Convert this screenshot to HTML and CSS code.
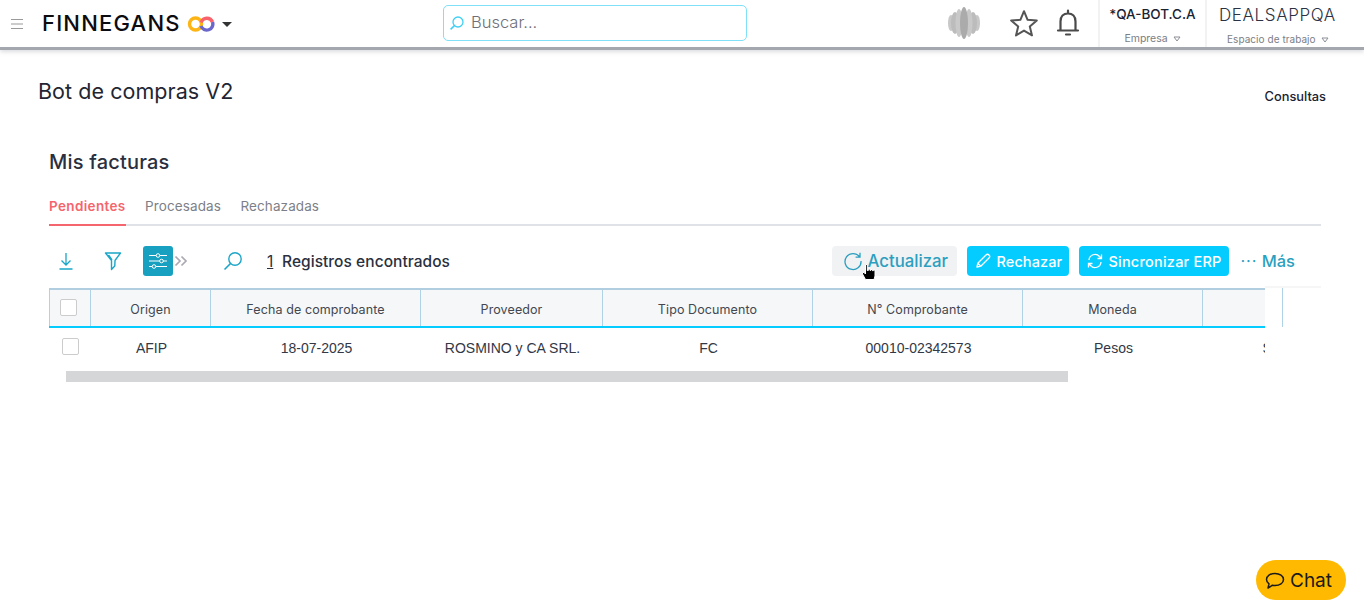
FILE: index.html
```html
<!DOCTYPE html>
<html lang="es">
<head>
<meta charset="utf-8">
<title>Bot de compras V2</title>
<link rel="stylesheet" href="styles.css">
</head>
<body>
<header class="topbar">
  <button class="menu-btn" aria-label="Menú">
    <svg width="14" height="12" viewBox="0 0 14 12"><path d="M1 1.500h12M1 6h12M1 10.500h12" stroke="#9a9a9a" stroke-width="1.200" fill="none"/></svg>
  </button>
  <div class="brand">
    <span class="brand-name">FINNEGANS</span>
    <svg class="brand-mark" width="28" height="18" viewBox="0 0 28 18">
      <circle cx="8.500" cy="9" r="6" fill="none" stroke="#fdb515" stroke-width="3.400"/>
      <path d="M14.200 7.500A6 6 0 0 1 25.500 7" fill="none" stroke="#f8636b" stroke-width="3.400"/>
      <path d="M25.500 7A6 6 0 1 1 14 11" fill="none" stroke="#6a66cc" stroke-width="3.400"/>
    </svg>
    <span class="caret"></span>
  </div>
  <div class="search">
    <svg width="16" height="16" viewBox="0 0 16 16"><circle cx="9" cy="7" r="5" fill="none" stroke="#3fd0f5" stroke-width="1.300"/><path d="M5.400 10.600 1.600 14.400" stroke="#3fd0f5" stroke-width="1.500"/></svg>
    <span class="search-text">Buscar...</span>
  </div>
  <div class="top-icons">
    <svg class="blob" width="32" height="32" viewBox="0 0 32 32">
      <ellipse cx="3" cy="16" rx="3" ry="8" fill="#c8c8c8"/>
      <ellipse cx="29" cy="16" rx="3" ry="8" fill="#c8c8c8"/>
      <ellipse cx="7" cy="16" rx="4" ry="11" fill="#bcbcbc"/>
      <ellipse cx="25" cy="16" rx="4" ry="11" fill="#bcbcbc"/>
      <ellipse cx="11" cy="16" rx="3.500" ry="14" fill="#c9c9c9"/>
      <ellipse cx="21" cy="16" rx="3.500" ry="14" fill="#c9c9c9"/>
      <ellipse cx="16" cy="16" rx="4" ry="16" fill="#ababab"/>
    </svg>
    <svg class="star" width="30" height="28" viewBox="0 0 30 28"><path d="M15 2.200 18.600 10.800 27.800 11.500 20.800 17.500 23 26.400 15 21.600 7 26.400 9.200 17.500 2.200 11.500 11.400 10.800Z" fill="none" stroke="#555" stroke-width="2" stroke-linejoin="round"/></svg>
    <svg class="bell" width="24" height="28" viewBox="0 0 24 28"><path d="M4.500 21V12.500C4.500 7.500 7.500 4.500 12 4.500S19.500 7.500 19.500 12.500V21M2 21.500H22M12 1.500V4.500M10 25.500H14" fill="none" stroke="#4a4a4a" stroke-width="2.200" stroke-linecap="round"/></svg>
  </div>
  <div class="selector sel-company">
    <span class="sel-value">*QA-BOT.C.A</span>
    <span class="sel-label">Empresa <svg class="mini-caret" width="8" height="6" viewBox="0 0 8 6"><path d="M1 1H7L4 5Z" fill="none" stroke="#8b8e95"/></svg></span>
  </div>
  <div class="selector sel-space">
    <span class="sel-value sel-light">DEALSAPPQA</span>
    <span class="sel-label">Espacio de trabajo <svg class="mini-caret" width="8" height="6" viewBox="0 0 8 6"><path d="M1 1H7L4 5Z" fill="none" stroke="#8b8e95"/></svg></span>
  </div>
</header>

<main class="page">
  <div class="page-head">
    <h1 class="page-title">Bot de compras V2</h1>
    <a class="page-link">Consultas</a>
  </div>
  <section class="panel">
    <h2 class="panel-title">Mis facturas</h2>
    <nav class="tabs">
      <a class="tab tab-active">Pendientes</a>
      <a class="tab">Procesadas</a>
      <a class="tab">Rechazadas</a>
    </nav>
    <div class="toolbar">
      <div class="tools">
        <svg class="tool t-down" width="18" height="20" viewBox="0 0 18 20"><path d="M9 2V14M4.500 9.500 9 14 13.500 9.500M2.500 18H15.500" fill="none" stroke="#1ba6c8" stroke-width="1.300"/></svg>
        <svg class="tool t-filter" width="18" height="20" viewBox="0 0 18 20"><path d="M1.500 2H16.500L11 9.500 10.800 15 7.500 18.500V9.500ZM4.500 4 8 9" fill="none" stroke="#1ba6c8" stroke-width="1.400" stroke-linejoin="round"/></svg>
        <span class="tool-active">
          <svg width="20" height="18" viewBox="0 0 20 18"><path d="M1 3.500H19M1 9H19M1 14.500H19" stroke="#fff" stroke-width="1.200"/><circle cx="10" cy="3.500" r="1.800" fill="#17a0bf" stroke="#fff"/><circle cx="13.500" cy="9" r="1.800" fill="#17a0bf" stroke="#fff"/><circle cx="6" cy="14.500" r="1.800" fill="#17a0bf" stroke="#fff"/></svg>
        </span>
        <svg class="t-more" width="14" height="12" viewBox="0 0 14 12"><path d="M1.500 1.500 6 6 1.500 10.500M7.500 1.500 12 6 7.500 10.500" fill="none" stroke="#a9a9b2" stroke-width="1.700"/></svg>
        <svg class="t-search" width="20" height="20" viewBox="0 0 20 20"><circle cx="12" cy="8" r="6.200" fill="none" stroke="#1ba6c8" stroke-width="1.400"/><path d="M7.500 12.500 1.500 18.500" stroke="#1ba6c8" stroke-width="1.600"/></svg>
        <span class="count"><u>1</u></span>
        <span class="count-label">Registros encontrados</span>
      </div>
      <div class="actions">
        <button class="btn btn-soft">
          <svg width="20" height="20" viewBox="0 0 20 20"><path d="M16.600 6A8 8 0 1 0 18 10M17 1.800V6.200H12.600" fill="none" stroke="#2b9fc0" stroke-width="1.300"/></svg>
          Actualizar
        </button>
        <button class="btn btn-primary btn-reject">
          <svg width="16" height="16" viewBox="0 0 16 16"><path d="M2 14 2.800 10.200 11 2A1.600 1.600 0 0 1 14 5L5.800 13.200ZM2.800 10.200 5.800 13.200" fill="none" stroke="#fff" stroke-width="1.300" stroke-linejoin="round"/></svg>
          Rechazar
        </button>
        <button class="btn btn-primary btn-sync">
          <svg width="16" height="16" viewBox="0 0 16 16"><path d="M2 7A6 6 0 0 1 12.500 3.500L14.500 5.500M14.500 1.500V5.500H10.500M14 9A6 6 0 0 1 3.500 12.500L1.500 10.500M1.500 14.500V10.500H5.500" fill="none" stroke="#fff" stroke-width="1.300"/></svg>
          Sincronizar ERP
        </button>
        <span class="more"><span class="dots">&middot;&middot;&middot;</span> Más</span>
      </div>
      <svg class="hand" width="16" height="18" viewBox="0 0 16 18"><path d="M4.500 1.500h1.800v6h1v-1.500h1.700v1.500h.8v-1h1.700v1.200h.8v-.7h1.700V13l-1 3.500H4.500L1.500 11V9.500h1.500l1.500 1.500Z" fill="#000" stroke="#fff" stroke-width="1"/></svg>
    </div>
    <div class="table-area">
      <div class="table-scroll">
        <table class="grid">
          <colgroup>
            <col class="c-check"><col class="c-origin"><col class="c-date"><col class="c-prov"><col class="c-date"><col class="c-date"><col class="c-cur"><col class="c-last">
          </colgroup>
          <thead>
            <tr>
              <th><span class="check check-head"></span></th>
              <th>Origen</th>
              <th>Fecha de comprobante</th>
              <th>Proveedor</th>
              <th>Tipo Documento</th>
              <th>N° Comprobante</th>
              <th>Moneda</th>
              <th></th>
            </tr>
          </thead>
          <tbody>
            <tr>
              <td><span class="check"></span></td>
              <td>AFIP</td>
              <td>18-07-2025</td>
              <td>ROSMINO y CA SRL.</td>
              <td>FC</td>
              <td>00010-02342573</td>
              <td>Pesos</td>
              <td class="cell-clipped">S</td>
            </tr>
          </tbody>
        </table>
      </div>
      <div class="table-side"><span class="side-line"></span></div>
    </div>
    <div class="hscroll"><div class="hscroll-thumb"></div></div>
  </section>
</main>

<button class="chat">
  <svg width="20" height="19" viewBox="0 0 20 19"><path d="M10 2.500C5.300 2.500 1.500 4.900 1.500 8.500c0 1.700 1 3.200 2.500 4.300L3 17l4.500-2.800c.8.200 1.600.3 2.500.3 4.700 0 8.500-2.500 8.500-6S14.700 2.500 10 2.500Z" fill="none" stroke="#1a1a1a" stroke-width="1.500" stroke-linejoin="round"/></svg>
  Chat
</button>
</body>
</html>
```

FILE: styles.css
```css
* { box-sizing: border-box; }
html, body { margin: 0; padding: 0; height: 100%; overflow: hidden; }
body { font-family: "Inter", "Liberation Sans", sans-serif; background: #fff; color: #1f2633; position: relative; }
button { font-family: inherit; border: 0; background: none; padding: 0; }
h1, h2 { margin: 0; font-weight: 500; }

.topbar { height: 50px; display: flex; align-items: stretch; border-bottom: 3px solid #a5a7ae; box-shadow: 0 2px 4px rgba(120,125,140,.25); }
.menu-btn { width: 42px; padding-left: 10px; display: flex; align-items: center; justify-content: flex-start; }
.brand { width: 401px; display: flex; align-items: center; }
.brand-name { font-size: 22px; font-weight: 500; color: #0c0c10; letter-spacing: 1.200px; width: 145px; margin-top: -2px; }
.brand-mark { margin-right: 7px; }
.caret { width: 0; height: 0; border-left: 5px solid transparent; border-right: 5px solid transparent; border-top: 5px solid #333; margin-top: 2px; }
.search { width: 304px; height: 36px; margin-top: 5px; border: 1px solid #7fe0f8; border-radius: 5px; display: flex; align-items: center; padding-left: 5px; gap: 6px; }
.search-text { font-size: 16.500px; font-weight: 300; color: #6d7078; margin-top: -2px; }
.top-icons { width: 351px; display: flex; align-items: center; padding-left: 201px; }
.blob { margin-top: -1px; }
.star { margin-left: 29px; margin-top: -2px; }
.bell { margin-left: 17px; margin-top: -2px; }
.selector { display: flex; flex-direction: column; align-items: center; border-left: 2px solid #f2f2f3; padding-top: 6px; }
.sel-company { width: 107px; }
.sel-space { width: 159px; align-items: flex-start; padding-left: 12px; padding-top: 7px; }
.sel-value { font-size: 13.500px; font-weight: 500; color: #1b2230; line-height: 17px; letter-spacing: 0; }
.sel-light { font-size: 17px; font-weight: 300; letter-spacing: .6px; line-height: 19px; color: #2b3244; margin-top: -1px; }
.sel-label { font-size: 10.500px; color: #7b7e86; margin-top: 9px; line-height: 13px; letter-spacing: 0; }
.sel-space .sel-label { font-size: 10px; margin-top: 8px; margin-left: 8px; letter-spacing: .05px; }
.mini-caret { margin-left: 2px; vertical-align: 0; }

.page { padding: 26px 43px 0 38px; }
.page-head { display: flex; justify-content: space-between; align-items: flex-start; height: 73px; }
.page-title { font-size: 21.500px; font-weight: 400; line-height: 30px; color: #1f2633; letter-spacing: .05px; }
.page-link { font-size: 12.800px; font-weight: 500; color: #1b2230; margin-top: 13px; line-height: 16px; margin-right: -5px; }

.panel { padding-left: 11px; }
.panel-title { font-size: 20px; line-height: 26px; height: 26px; color: #2a3040; letter-spacing: .2px; }
.tabs { display: flex; gap: 19.500px; margin-top: 22px; border-bottom: 2px solid #dfe3e8; height: 29px; width: 1272px; }
.tab { font-size: 13.500px; line-height: 18px; height: 29px; color: #7d7f88; letter-spacing: .1px; }
.tab-active { color: #f5656d; font-weight: 600; border-bottom: 2px solid #f5656d; letter-spacing: .35px; }

.toolbar { display: flex; justify-content: space-between; align-items: center; height: 30px; margin-top: 20px; width: 1246px; position: relative; }
.tools { display: flex; align-items: center; }
.tool { display: block; }
.t-down { margin-left: 8px; }
.t-filter { margin-left: 29px; }
.tool-active { width: 30px; height: 30px; background: #17a0bf; border-radius: 3px; display: flex; align-items: center; justify-content: center; margin-left: 21px; }
.t-more { margin-left: 1px; }
.t-search { margin-left: 35px; }
.count { font-size: 15.500px; margin-left: 24px; width: 15px; color: #2a3040; }
.count-label { font-size: 15.500px; font-weight: 500; color: #2a3040; letter-spacing: .05px; }
.actions { display: flex; align-items: center; gap: 10px; }
.btn { height: 30px; border-radius: 4px; display: flex; align-items: center; font-size: 14.500px; font-weight: 500; }
.btn-soft { width: 125px; background: #f1f2f4; color: #2b9fc0; font-size: 16.800px; padding-left: 11px; gap: 4px; }
.btn-primary { background: #05ccff; color: #fff; padding: 0 0 0 8px; gap: 5px; }
.btn-reject { width: 102px; letter-spacing: .1px; }
.btn-sync { width: 150px; letter-spacing: .22px; }
.more { font-size: 16.500px; font-weight: 500; color: #2b9fc0; margin-left: 1px; }
.dots { letter-spacing: .85px; font-weight: 400; }
.hand { position: absolute; left: 812px; top: 17px; }

.table-area { display: flex; margin-top: 12px; }
.table-scroll { width: 1216px; overflow: hidden; flex: none; }
.grid { border-collapse: collapse; table-layout: fixed; width: 1323px; }
.c-check { width: 41px; }
.c-origin { width: 120px; }
.c-date { width: 210px; }
.c-prov { width: 182px; }
.c-cur { width: 180px; }
.c-last { width: 170px; }
.grid th { height: 38px; background: #f5f7f9; border-top: 2px solid #b0cee0; border-bottom: 2px solid #05ccff; border-right: 1px solid #b0d2e6; font-size: 12.500px; font-weight: 400; color: #44474f; padding: 2px 0 0; letter-spacing: .1px; }
.grid th:first-child { border-left: 1px solid #b0d2e6; }
.grid td { height: 40px; font-family: "Liberation Sans", sans-serif; font-size: 14px; color: #323846; text-align: center; padding: 0 0 0 2px; }
.cell-clipped { text-align: left !important; padding-left: 60px !important; }
.check { display: block; width: 17px; height: 17px; border: 1px solid #ccc; border-radius: 2px; background: #fff; margin: -3px 0 0 10px; }
.table-side { flex: 1; max-width: 56px; border-top: 2px solid #f6f6f6; margin-top: -2px; height: 41px; position: relative; }
.side-line { position: absolute; left: 17px; top: 0; height: 39px; width: 1px; background: #b0d2e6; }

.hscroll { width: 1216px; height: 11px; margin-top: 4px; padding-left: 17px; }
.hscroll-thumb { width: 1002px; height: 11px; background: #d5d6d8; }

.chat { position: absolute; left: 1256px; top: 560px; width: 90px; height: 40px; background: #ffb900; border-radius: 20px; display: flex; align-items: center; padding-left: 9px; gap: 5px; font-size: 19px; font-weight: 400; color: #1a1a1a; }
```
